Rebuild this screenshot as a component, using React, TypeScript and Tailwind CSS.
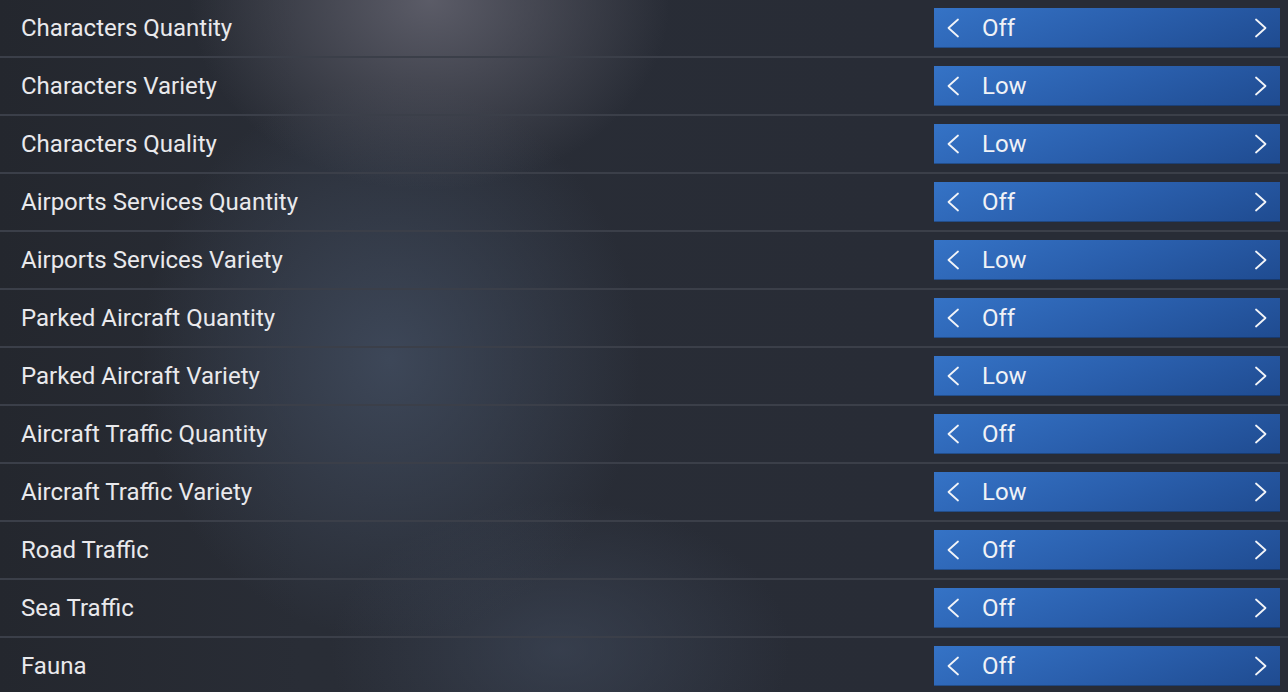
import React from "react";

const rows: [string, string][] = [
  ["Characters Quantity", "Off"],
  ["Characters Variety", "Low"],
  ["Characters Quality", "Low"],
  ["Airports Services Quantity", "Off"],
  ["Airports Services Variety", "Low"],
  ["Parked Aircraft Quantity", "Off"],
  ["Parked Aircraft Variety", "Low"],
  ["Aircraft Traffic Quantity", "Off"],
  ["Aircraft Traffic Variety", "Low"],
  ["Road Traffic", "Off"],
  ["Sea Traffic", "Off"],
  ["Fauna", "Off"],
];

function Chevron({ dir }: { dir: "left" | "right" }) {
  return (
    <svg width="14" height="20" viewBox="0 0 14 20" fill="none" className="shrink-0">
      <path
        d={dir === "left" ? "M12 1.5 L2.5 10 L12 18.5" : "M2 1.5 L11.5 10 L2 18.5"}
        stroke="#f2f4f8"
        strokeWidth="1.8"
        strokeLinecap="round"
        strokeLinejoin="round"
      />
    </svg>
  );
}

export default function App() {
  return (
    <div className="w-[1288px] h-[692px] overflow-hidden bg-[#272b34] bg-[radial-gradient(ellipse_240px_190px_at_430px_0px,rgba(100,100,112,0.85),transparent),radial-gradient(ellipse_250px_280px_at_390px_360px,rgba(68,80,100,0.75),transparent),radial-gradient(ellipse_230px_150px_at_560px_650px,rgba(64,74,92,0.6),transparent),linear-gradient(90deg,#24272e_0px,#292d36_300px,#282c36_900px)] font-['Roboto',sans-serif]">
      {rows.map(([label, value]) => (
        <div
          key={label}
          className="h-[58px] flex items-center justify-between pl-[21px] pr-2 border-b-2 border-[#3b3f49] box-border"
        >
          <span className="text-[24px] text-[#e9e9ec] leading-none">{label}</span>
          <div className="w-[346px] h-10 flex items-center pl-[12px] pr-[12px] bg-[linear-gradient(160deg,#3573c6_0%,#2a5fad_50%,#1f4b90_100%)] shadow-[inset_0_-1px_0_rgba(0,0,0,0.25)]">
            <Chevron dir="left" />
            <span className="ml-[22px] text-[24px] text-[#f0f2f6] leading-none flex-1">{value}</span>
            <Chevron dir="right" />
          </div>
        </div>
      ))}
    </div>
  );
}
